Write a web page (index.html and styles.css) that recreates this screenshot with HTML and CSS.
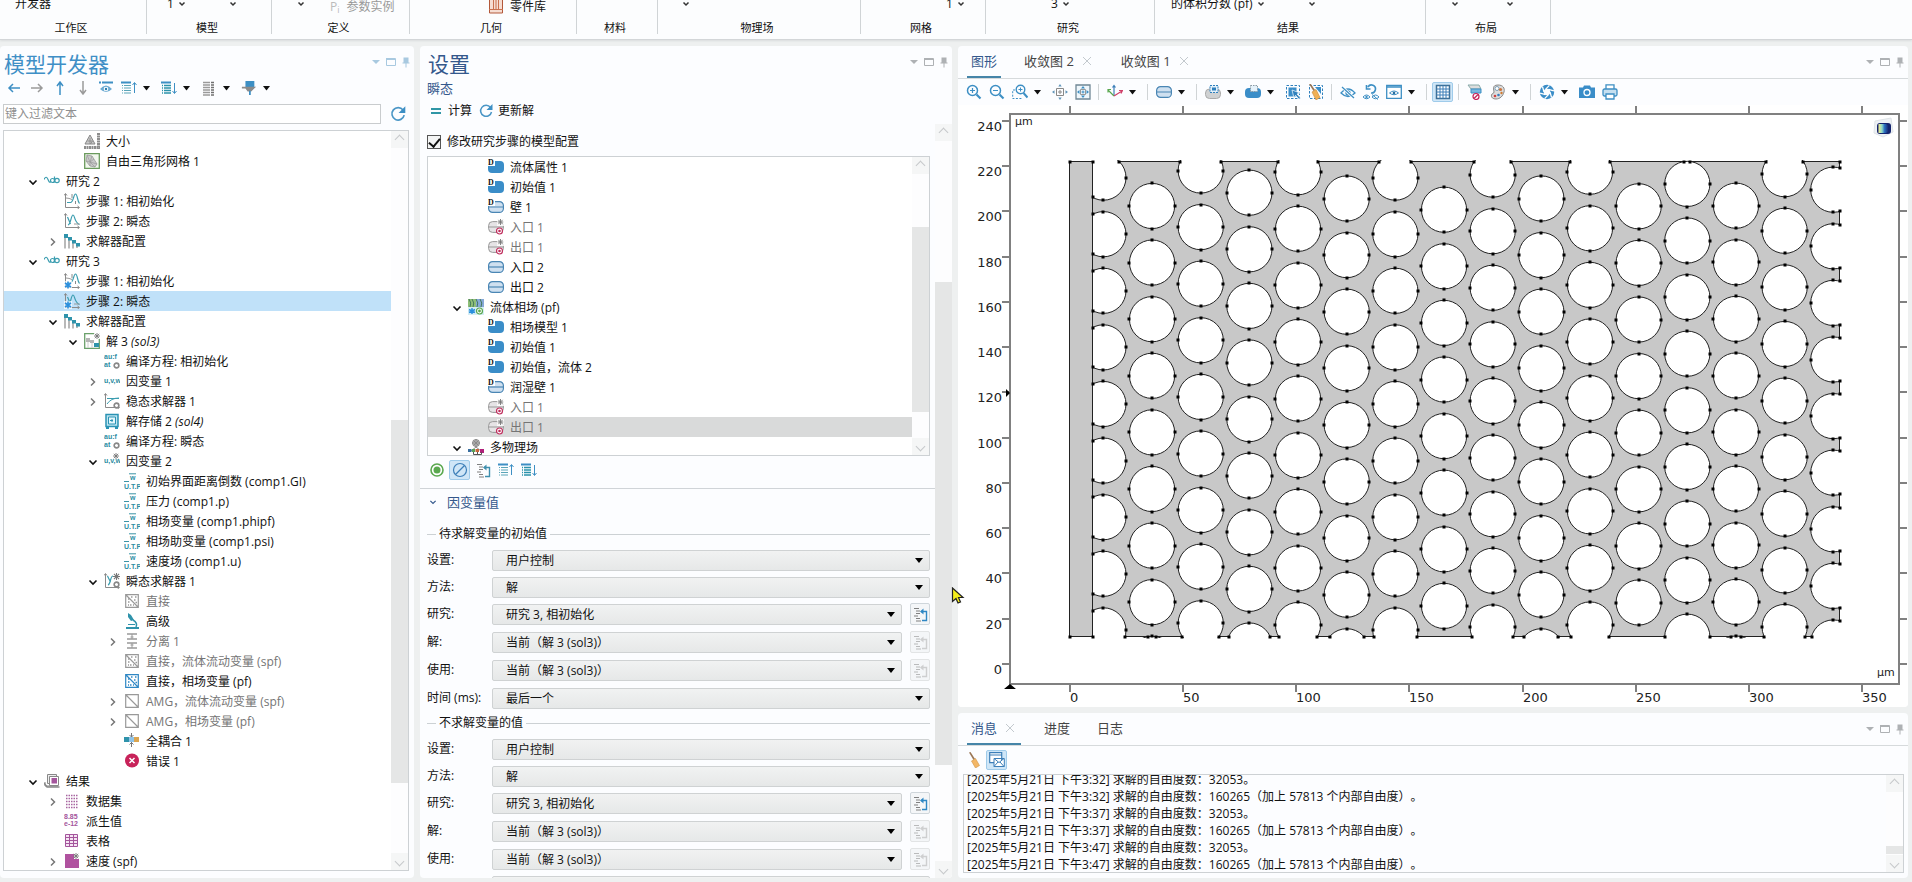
FILE: index.html
```html
<!DOCTYPE html>
<html lang="zh-CN">
<head>
<meta charset="utf-8">
<title>模型开发器</title>
<link rel="stylesheet" href="styles.css">
</head>
<body>
<svg class="defs" aria-hidden="true">
  <symbol id="chev-open" viewBox="0 0 16 16"><path d="M4.500 6.500 8 10l3.500-3.500" fill="none" stroke="currentColor" stroke-width="1.600"/></symbol>
  <symbol id="chev-shut" viewBox="0 0 16 16"><path d="M6 4.500 9.500 8 6 11.500" fill="none" stroke="#777" stroke-width="1.500"/></symbol>
  <symbol id="tri" viewBox="0 0 12 12"><path d="M3 4h7l-3.500 4.500z" fill="currentColor"/></symbol>
  <symbol id="mini" viewBox="0 0 8 8"><path d="M1.500 2.500 4 5l2.500-2.500" fill="none" stroke="#333" stroke-width="1.500"/></symbol>
  <symbol id="close" viewBox="0 0 10 10"><path d="m1 1 8 8M9 1 1 9" stroke="#c3c9ce" fill="none"/></symbol>
  <symbol id="w-down" viewBox="0 0 14 14"><path d="M3 5h8l-4 4z" fill="currentColor"/></symbol>
  <symbol id="w-max" viewBox="0 0 14 14"><path d="M2.500 3.500h9v7h-9zM2.500 3v1.500h9" fill="none" stroke="currentColor"/></symbol>
  <symbol id="w-pin" viewBox="0 0 14 14"><path d="M4.500 2.500h5v5h1v1h-3v4h-1v-4h-3v-1h1z" fill="currentColor"/></symbol>
  <symbol id="star" viewBox="0 0 6 6"><path d="M3 0v6M0 3h6M.8.8l4.400 4.400M5.200.8.8 5.200" stroke="currentColor" stroke-width=".9"/></symbol>
  <symbol id="gear" viewBox="0 0 6 6"><circle cx="3" cy="3" r="2" fill="#fff" stroke="#888" stroke-width="1.400"/></symbol>

  <symbol id="left" viewBox="0 0 16 16"><path d="M14 8H3M7 4 3 8l4 4" fill="none" stroke="#3d8fc4" stroke-width="1.500"/></symbol>
  <symbol id="right" viewBox="0 0 16 16"><path d="M2 8h11M9 4l4 4-4 4" fill="none" stroke="#9a9a9a" stroke-width="1.500"/></symbol>
  <symbol id="up" viewBox="0 0 16 16"><path d="M8 15V3M5 6l3-4 3 4" fill="none" stroke="#3d8fc4" stroke-width="1.500"/></symbol>
  <symbol id="down" viewBox="0 0 16 16"><path d="M8 1v12M5 10l3 4 3-4" fill="none" stroke="#9a9a9a" stroke-width="1.500"/></symbol>
  <symbol id="show" viewBox="0 0 16 16"><path d="M1 2.500h2M4 2.500h11" stroke="#3d8fc4" stroke-width="2"/><path d="M2 9q6-7 12 0-6 6-12 0z" fill="#6aaad2"/><circle cx="8" cy="9" r="2.300" fill="#fff"/><circle cx="8" cy="9" r="1.200" fill="#2b7db0"/></symbol>
  <symbol id="list-up" viewBox="0 0 16 16"><path d="M0 2.500h10" stroke="#3d8fc4" stroke-width="2"/><path d="M1 5.500h1M3 5.500h7M1 8h1M3 8h7M1 10.500h1M3 10.500h7M1 13h1M3 13h7" stroke="#5aa5b8"/><path d="M13.500 13V3M11.500 5l2-2.500 2 2.500" fill="none" stroke="#3d8fc4"/></symbol>
  <symbol id="list-down" viewBox="0 0 16 16"><path d="M0 2.500h10" stroke="#3d8fc4" stroke-width="2"/><path d="M1 5.500h1M3 5.500h7M1 8h1M3 8h7M1 10.500h1M3 10.500h7M1 13h1M3 13h7" stroke="#2b93ab" stroke-width="1.500"/><path d="M13.500 3v10M11.500 11l2 2.500 2-2.500" fill="none" stroke="#3d8fc4"/></symbol>
  <symbol id="list-col" viewBox="0 0 16 16"><path d="M2 2.500h7M2 5h7M2 7.500h7M2 10h7M2 12.500h7M2 15h7" stroke="#9a9a9a" stroke-width="1.500"/><path d="M10 2.500h3M10 5h3M10 7.500h3M10 10h3M10 12.500h3M10 15h3" stroke="#707070" stroke-width="1.700"/></symbol>
  <symbol id="funnel" viewBox="0 0 18 16"><path d="M5 0h10v7H5z" fill="#3d8fc4"/><path d="M1 6.500h16L11.500 12h-4L5 8.500H1z" fill="#8b8b8b"/><path d="M9 11h2v5H9z" fill="#3d8fc4"/></symbol>
  <symbol id="refresh" viewBox="0 0 16 16"><path d="M12.500 4.500A5.500 5.500 0 1 0 13.500 9" fill="none" stroke="#4a96c6" stroke-width="1.500"/><path d="M14.500 1v6h-6z" fill="#3d8fc4"/></symbol>
  <symbol id="equal" viewBox="0 0 16 16"><path d="M3 6h10M3 10h10" stroke="#2f96a6" stroke-width="2.200"/></symbol>

  <symbol id="size" viewBox="0 0 16 16"><path d="M6 2 11 11H1z" fill="#c9c9c9" stroke="#888"/><path d="M6 5v6M3.500 8h5l-2 3" fill="none" stroke="#888" stroke-width=".8"/><path d="M0 14.500h16M14.500 0v16" stroke="#8d8d8d" stroke-width="3" stroke-dasharray="2 .5"/></symbol>
  <symbol id="mesh" viewBox="0 0 16 16"><path d="M.7.7h14.600v14.600H.7z" fill="#f2f7ee" stroke="#6a9a5c" stroke-width="1.300"/><path d="m3 2 5 1 5 8-2 3-5-1-4-5z" fill="#c9c9c9" stroke="#999" stroke-width=".8"/><path d="m3 2 3 7 5 5M2 8l4 1 4-3M6 9l7 2M8 3 6 9v4" fill="none" stroke="#999" stroke-width=".7"/></symbol>
  <symbol id="study" viewBox="0 0 16 16"><path d="M0 6.500C1.500 3 3 4 4 6.500s1.500 3.500 3 2" fill="none" stroke="#3b9db0" stroke-width="1.200"/><circle cx="8.500" cy="7.500" r="2" fill="none" stroke="#3b9db0" stroke-width="1.200"/><path d="M10.500 3.500v6" stroke="#3b9db0" stroke-width="1.200"/><circle cx="13" cy="7.500" r="2.200" fill="none" stroke="#3b9db0" stroke-width="1.200"/></symbol>
  <symbol id="axes" viewBox="0 0 16 16"><path d="M1.500 1v13.500H15M0 2.500 1.500.5 3 2.500M13.500 13l2 1.500-2 1.500" fill="none" stroke="#8a8a8a"/></symbol>
  <symbol id="step1" viewBox="0 0 16 16"><use href="#axes"/><path d="M2 5q3 0 6 1.500" stroke="#999" fill="none"/><path d="M3 9.500h3.500c3 0 3-8.500 5-8.500s2 8 4 9.500" fill="none" stroke="#3b9db0" stroke-width="1.200"/><path d="M8 1v4M11.500 8v3" stroke="#8a8a8a"/></symbol>
  <symbol id="step2" viewBox="0 0 16 16"><use href="#axes"/><path d="m3.500 4 3 7M4 12C7 11 7 2 9 2s1 7 6.500 9.500" fill="none" stroke="#3b9db0" stroke-width="1.200"/><path d="M10 11h5.500" stroke="#999"/></symbol>
  <symbol id="snow" viewBox="0 0 16 16"><path d="M0 8h8v8H0z" fill="#fff" opacity=".7"/><path d="M4 8.500v7M1 10l6 4M7 10l-6 4" stroke="#2a8fdd" stroke-width="1.600"/></symbol>
  <symbol id="step1s" viewBox="0 0 16 16"><use href="#step1"/><use href="#snow"/></symbol>
  <symbol id="step2s" viewBox="0 0 16 16"><use href="#step2"/><use href="#snow"/></symbol>
  <symbol id="conf" viewBox="0 0 16 16"><path d="M1 4v11.500M5 6v9.500M9 9v6.500M13 11v4" stroke="#8a8a8a" stroke-width="1.200"/><path d="M0 1h4v4H0zM4 4h4v3.500H4zM8 7h4v3.500H8zM12 10h4v3.500h-4z" fill="#2f93ab"/></symbol>
  <symbol id="sol" viewBox="0 0 16 16"><path d="M.7.7h14.600v14.600H.7z" fill="#fff" stroke="#6aa06a" stroke-width="1.300"/><path d="M2 5h4v4H2zM6 7h4v3H6z" fill="#b5b5b5"/><path d="M4 9v6M8 10v5" stroke="#ccc"/><path d="M10 10h5v4h-5z" fill="#2f93ab"/><path d="M10 0h6v6h-6z" fill="#fff"/><use href="#star" x="10" y="0" width="6" height="6" color="#777"/></symbol>
  <symbol id="compile" viewBox="0 0 16 16"><g class="glyphs teal"><text x="0" y="6">au:f</text><text x="0" y="14">at</text></g><use href="#gear" x="9" y="9" width="7" height="7"/></symbol>
  <symbol id="uvw" viewBox="0 0 16 16"><text class="glyphs teal" x="0" y="10">u,v,w</text></symbol>
  <symbol id="uvws" viewBox="0 0 16 16"><use href="#uvw"/><use href="#star" x="9" y="0" width="6" height="6" color="#777"/></symbol>
  <symbol id="stat" viewBox="0 0 16 16"><use href="#axes"/><path d="M3 11q4-6 12-6M3 5.500h12" fill="none" stroke="#3b9db0"/><use href="#gear" x="9" y="9" width="7" height="7"/></symbol>
  <symbol id="tran" viewBox="0 0 16 16"><use href="#axes"/><path d="m3.500 3 3 6M4 12C7 11 6 3 9 3" fill="none" stroke="#3b9db0" stroke-width="1.200"/><use href="#star" x="9" y="0" width="7" height="7" color="#777"/><use href="#gear" x="9" y="8" width="7" height="7"/></symbol>
  <symbol id="store" viewBox="0 0 16 16"><path d="M2 1.500h12v12H2z" fill="#bfe6f2" stroke="#2a93b4" stroke-width="1.500"/><path d="M4.500 4h7v7h-7z" fill="#e4f6fb" stroke="#2a93b4"/><path d="M6 7.500h3M8 6v3" stroke="#2a93b4"/><path d="M2 15h3M11 15h3" stroke="#2a93b4" stroke-width="2"/></symbol>
  <symbol id="field" viewBox="0 0 16 16"><path d="M5 .8h7M0 8.500h5" stroke="#3b93a6"/><g class="glyphs teal"><text x="6" y="7">w</text><text x="0" y="15.500">U.T.P</text></g></symbol>
  <symbol id="direct" viewBox="0 0 16 16"><path d="M1.700 1.700h12.600v12.600H1.700zM2 2l12 12" fill="none" stroke="currentColor" stroke-width="1.200"/><path d="M4 6h1.500M4 9h1.500M6 12h1.500M7 4h1.500M11 4h1.500M10 7h1.500M11.500 9.500H13M4 12h1M9 12h1" stroke="currentColor" stroke-width="1.600"/></symbol>
  <symbol id="amg" viewBox="0 0 16 16"><path d="M1.700 1.700h12.600v12.600H1.700zM2 2l12 12" fill="none" stroke="currentColor" stroke-width="1.200"/></symbol>
  <symbol id="micro" viewBox="0 0 16 16"><path d="M4 0 7 2l3 5-3 1-3-4zM2 14h13v2H2zM4 11h7v1H4z" fill="#2f93ab"/><path d="M9 7q5 3 3 7" fill="none" stroke="#2f93ab" stroke-width="1.500"/></symbol>
  <symbol id="segr" viewBox="0 0 16 16"><path d="M3 1h10M3 6h10M3 10h10M3 15h10" stroke="#999" stroke-width="1.500"/><path d="M8 1v5M8 10v5M6.500 4h3M6.500 12h3" stroke="#999"/></symbol>
  <symbol id="couple" viewBox="0 0 16 16"><path d="M0 4h5v5H0z" fill="#2f93ab"/><path d="M5 4h5v5H5z" fill="#8fc3e8"/><path d="M10 4h5v5h-5z" fill="#dba550"/><path d="M7.500 0v4M5.500 2l2 2 2-2M7.500 9v5M5.500 11.500l2-2 2 2" fill="none" stroke="#777"/></symbol>
  <symbol id="error" viewBox="0 0 16 16"><circle cx="8" cy="7.500" r="7" fill="#c8235a"/><path d="m5.500 5 5 5M10.500 5l-5 5" stroke="#fff" stroke-width="1.500"/></symbol>
  <symbol id="result" viewBox="0 0 16 16"><path d="M1 9V13h13" fill="none" stroke="#888"/><path d="M3.500 1.500h9v9h-9z" fill="#eee" stroke="#888"/><path d="M5.500 3.500h9v9h-9z" fill="#fff" stroke="#888"/><path d="M7.500 5h5.500v5.500H7.500z" fill="#a4559c"/><path d="M0 10l3 4h12.500" fill="none" stroke="#888" stroke-width="1.500"/></symbol>
  <symbol id="dataset" viewBox="0 0 16 16"><path d="M2 2.500h12M2 5.500h12M2 8.500h12M2 11.500h12M2 14.500h12" stroke="#a765a0" stroke-width="1.300" stroke-dasharray="1.500 1"/></symbol>
  <symbol id="derived" viewBox="0 0 16 16"><g class="glyphs plum"><text x="0" y="6">8.85</text><text x="0" y="13">e-12</text></g></symbol>
  <symbol id="table" viewBox="0 0 16 16"><path d="M1.500 1.500h12v12h-12zM1.500 4.500h12M1.500 7.500h12M1.500 10.500h12M5.500 1.500v12M9.500 1.500v12" fill="#f5e4f3" stroke="#a4559c"/></symbol>
  <symbol id="surf" viewBox="0 0 16 16"><path d="M1 1h9v5h5v9H1z" fill="#b0529f"/><use href="#star" x="9" y="0" width="6" height="6" color="#777"/></symbol>

  <symbol id="dom" viewBox="0 0 16 16"><rect y="2" width="16" height="12" rx="4" fill="#3a8dc8"/><path d="M0 0h7v7H0z" fill="#fff"/><text class="dee" x="0" y="6">D</text></symbol>
  <symbol id="bnd" viewBox="0 0 16 16"><rect x=".6" y="2.600" width="14.800" height="10.800" rx="4" fill="#cfe0f0" stroke="#4a86b4" stroke-width="1.200"/><path d="M1 8h14" stroke="#4a86b4" stroke-width="1.200"/></symbol>
  <symbol id="bndd" viewBox="0 0 16 16"><use href="#bnd"/><path d="M0 0h7v7H0z" fill="#fff"/><text class="dee" x="0" y="6">D</text></symbol>
  <symbol id="off" viewBox="0 0 16 16"><rect x=".6" y="2.600" width="14.800" height="10.800" rx="4" fill="#e6e4e6" stroke="#999"/><path d="M1 8h14" stroke="#999"/><path d="M9 0h7v7H9z" fill="#fff" opacity=".8"/><use href="#star" x="9.500" y="0" width="6" height="6" color="#777"/><circle cx="11.500" cy="12" r="3" fill="#fff" stroke="#c0305f" stroke-width="1.200"/><circle cx="11.500" cy="12" r="1.300" fill="#c0305f"/></symbol>
  <symbol id="pf" viewBox="0 0 16 16"><path d="M0 0h8v8H0z" fill="#8fbf78"/><path d="M8 0h8v8H8z" fill="#86a9d8"/><path d="M1 0q3 4 1 8M4 0q3 4 1 8M8 0q3 4 1 8M12 0q3 4 1 8" fill="none" stroke="#46795c"/><path d="M0 8h16v8H0z" fill="#d5edf5"/><path d="M4 9v6M1 10.500l6 3M7 10.500l-6 3" stroke="#2a8fdd" stroke-width="1.400"/><circle cx="11.500" cy="12" r="3" fill="#fff" stroke="#5aa84f" stroke-width="1.200"/><circle cx="11.500" cy="12" r="1.400" fill="#5aa84f"/></symbol>
  <symbol id="multi" viewBox="0 0 16 16"><circle cx="8" cy="4" r="3.500" fill="#c4c4c4" stroke="#8a8a8a"/><path d="M8 0v8M4 4h8M8 8 3 12M8 8l5 4M5.500 1.500l5 5M10.500 1.500l-5 5" stroke="#8a8a8a"/><path d="M0 10h3.500v3H0z" fill="#3a6fa0"/><path d="M4 10h3v3H4z" fill="#58a455"/><path d="M7.500 10h3.500v3H7.500z" fill="#c8643c"/><path d="M12 10h4v4h-4z" fill="#b0207a"/><path d="M5.500 13v2.500h8V13M9.500 13v2.500" fill="none" stroke="#555"/></symbol>
  <symbol id="target" viewBox="0 0 16 16"><circle cx="8" cy="8" r="6" fill="#fff" stroke="#5aa84f" stroke-width="1.600"/><circle cx="8" cy="8" r="3.500" fill="#5aa84f"/></symbol>
  <symbol id="ban" viewBox="0 0 16 16"><circle cx="8" cy="8" r="6.500" fill="none" stroke="#3d7fb8" stroke-width="1.200"/><path d="m3.500 12.500 9-9" stroke="#3d7fb8" stroke-width="1.200"/></symbol>
  <symbol id="goto" viewBox="0 0 16 16"><path d="M2 2.500h5M4 5h4M4 7.500h4M2 10h4M4 12.500h4M4 15h5" stroke="#808080" stroke-width="1.200"/><path d="M10 14.500h4.500v-9H9" fill="none" stroke="currentColor" stroke-width="1.400"/><path d="M11.500 2.500v6l-3.500-3z" fill="currentColor"/></symbol>

  <symbol id="zin" viewBox="0 0 16 16"><circle cx="6.500" cy="6.500" r="5" fill="none" stroke="#3d8fc4" stroke-width="1.500"/><path d="M4 6.500h5M6.500 4v5" stroke="#3d8fc4" stroke-width="1.200"/><path d="m10.500 10.500 4 4" stroke="#3d8fc4" stroke-width="2.200"/></symbol>
  <symbol id="zout" viewBox="0 0 16 16"><circle cx="6.500" cy="6.500" r="5" fill="none" stroke="#3d8fc4" stroke-width="1.500"/><path d="M4 6.500h5" stroke="#3d8fc4" stroke-width="1.200"/><path d="m10.500 10.500 4 4" stroke="#3d8fc4" stroke-width="2.200"/></symbol>
  <symbol id="zbox" viewBox="0 0 16 16"><path d="M3 6H.7v8.500h9" fill="none" stroke="#3d8fc4" stroke-dasharray="2 1.500"/><circle cx="8.500" cy="5.500" r="4.300" fill="none" stroke="#3d8fc4" stroke-width="1.400"/><path d="M6.500 5.500h4M8.500 3.500v4" stroke="#3d8fc4"/><path d="m11.500 9 4 4.500" stroke="#3d8fc4" stroke-width="2"/></symbol>
  <symbol id="center" viewBox="0 0 16 16"><path d="M4.500 4.500h7v7h-7z" fill="none" stroke="#888"/><path d="M8 6v4M6 8h4" stroke="#888"/><path d="M8 0 6.300 2.500h3.400zM8 16l-1.700-2.500h3.400zM0 8l2.500-1.700v3.400zM16 8l-2.500-1.700v3.400z" fill="#5d93b8"/></symbol>
  <symbol id="fit" viewBox="0 0 16 16"><path d="M1 1h14v14H1z" fill="#eef6fb" stroke="#6f8795" stroke-width="1.300"/><path d="M5.500 5.500h5v5h-5z" fill="none" stroke="#999"/><path d="M8 2 6 4.500h4zM8 14l-2-2.500h4zM2 8l2.500-2v4zM14 8l-2.500-2v4z" fill="#3d8fc4"/><path d="M8 6.500v3M6.500 8h3" stroke="#3d8fc4"/></symbol>
  <symbol id="xyz" viewBox="0 0 16 16"><path d="M7 12V2M5.500 3.500 7 1.500l1.500 2" fill="none" stroke="#3d7fb8" stroke-width="1.200"/><path d="M7 12 1 6M1 8.500V5.500h3" fill="none" stroke="#5aa84f" stroke-width="1.200"/><path d="m7 12 8-5M12 6.500h3.500L14 9.500" fill="none" stroke="#d0406a" stroke-width="1.200"/></symbol>
  <symbol id="selobj" viewBox="0 0 16 16"><rect x=".5" y="5" width="15" height="9.500" rx="4" fill="#cfd1d2" stroke="#aaa"/><path d="M5 1.500h8v7H5z" fill="#e4f1fa" stroke="#2f80bd" stroke-dasharray="2 1"/><path d="M7 3.500h4v3H7z" fill="#2f80bd"/></symbol>
  <symbol id="seldom" viewBox="0 0 16 16"><rect x="0" y="4" width="16" height="10" rx="4" fill="#3a8dc8"/><path d="M5.500 1.500h7v6h-7z" fill="#e4f1fa" stroke="#8a9aa5" stroke-dasharray="1.500 1"/></symbol>
  <symbol id="selbox" viewBox="0 0 16 16"><path d="M1.500 1.500h13v13h-13z" fill="none" stroke="#2f80bd" stroke-dasharray="2.500 1.500"/><path d="M3.500 3.500h8v9h-8z" fill="#3a8dc8"/><path d="m7 6 8 3-3 1 3.500 4-1.500 1.300-3.500-4L9 14z" fill="#2f80bd" stroke="#fff" stroke-width=".7"/></symbol>
  <symbol id="broombox" viewBox="0 0 16 16"><path d="M1.500 1.500h13v13h-13z" fill="none" stroke="#2f80bd" stroke-dasharray="2.500 1.500"/><path d="M7 3h6v7z" fill="#3a8dc8"/><path d="m1 0 1.500-.5L7 6 5.500 7z" fill="#9a7655"/><path d="m4 8 4-2.500 4 8L8 16z" fill="#f0b055" stroke="#c88a3a" stroke-width=".6"/></symbol>
  <symbol id="hide" viewBox="0 0 16 16"><path d="M1 9q7-8 14 0-7 7-14 0z" fill="none" stroke="#3d8fc4" stroke-width="1.300"/><circle cx="8" cy="9" r="2" fill="none" stroke="#3d8fc4" stroke-width="1.300"/><path d="m2 3 12 11" stroke="#fff" stroke-width="3"/><path d="m2 3 12 11" stroke="#3d8fc4" stroke-width="1.300"/></symbol>
  <symbol id="unhide" viewBox="0 0 16 16"><path d="M5 3a4 4 0 1 1 3 6M3.500 1v4h4" fill="none" stroke="#3d8fc4" stroke-width="1.600"/><path d="M0 13q3.500-4 7 0-3.500 3.500-7 0zM9 13q3.500-4 7 0-3.500 3.500-7 0zM9 10.500l6 5" fill="none" stroke="#3d8fc4"/><circle cx="3.500" cy="13" r="1.200" fill="#3d8fc4"/></symbol>
  <symbol id="winview" viewBox="0 0 16 16"><path d="M.7 1.500h14.600v12.800H.7z" fill="#fff" stroke="#3d8fc4" stroke-width="1.300"/><path d="M1 3h14" stroke="#3d8fc4" stroke-width="1.500"/><path d="M3.500 9Q8 5 12.500 9 8 12.500 3.500 9z" fill="none" stroke="#3d8fc4"/><circle cx="8" cy="9" r="1.300" fill="#2a6f9f"/></symbol>
  <symbol id="grid" viewBox="0 0 16 16"><path d="M1.500 1.500h13v13h-13z" fill="#fff" stroke="#3d6f96" stroke-width="1.500"/><path d="M1.500 5h13M1.500 8h13M1.500 11h13M5 1.500v13M8 1.500v13M11 1.500v13" stroke="#3d7fb8"/></symbol>
  <symbol id="clip" viewBox="0 0 16 16"><path d="m1 1 3 4h10l-2-4z" fill="#ddd" stroke="#8aa"/><path d="M4 5h10v4H4z" fill="#7ab8e0" stroke="#3d8fc4"/><circle cx="9" cy="12.500" r="3" fill="#fff" stroke="#c8235a" stroke-width="1.200"/><path d="m7 14.500 4-4" stroke="#c8235a" stroke-width="1.200"/></symbol>
  <symbol id="palette" viewBox="0 0 16 16"><path d="M8 1c5 0 7 3 6 7s-4 7-8 7c-3 0-5-1.500-4.500-4 .3-2 2.500-1 2.500-3S1.500 1 8 1z" fill="#dcdcdc" stroke="#888"/><circle cx="7" cy="4.500" r="2" fill="#fff" stroke="#7d9fb8"/><circle cx="10.500" cy="5.500" r="1.600" fill="#c9743f"/><circle cx="5" cy="12" r="1.300" fill="#d04040"/><circle cx="8.500" cy="11" r="1.300" fill="#3a7fc0"/><circle cx="11.500" cy="9" r="1.200" fill="#d07a30"/></symbol>
  <symbol id="shutter" viewBox="0 0 16 16"><circle cx="8" cy="8" r="5.200" fill="none" stroke="#3a8dc8" stroke-width="4"/><path d="m11 8 1.500 5.400M9.500 10.600l-3.900 4M6.500 10.600 1.100 9.200M5 8 3.500 2.600M6.500 5.400l3.900-4M9.500 5.400l5.400 1.400" stroke="#fff" stroke-width="1.300"/></symbol>
  <symbol id="camera" viewBox="0 0 16 16"><path d="M0 3.500h4l1-2h6l1 2h4v10.500H0z" fill="#3a8dc8"/><circle cx="8" cy="8.500" r="3" fill="none" stroke="#fff" stroke-width="1.300"/></symbol>
  <symbol id="printer" viewBox="0 0 16 16"><path d="M4 5V.8h8V5" fill="#fff" stroke="#3d8fc4" stroke-width="1.300"/><rect x="1" y="5" width="14" height="7" rx="1.500" fill="#c5dff0" stroke="#3d8fc4" stroke-width="1.300"/><path d="M4 10h8v5H4z" fill="#fff" stroke="#3d8fc4" stroke-width="1.300"/></symbol>
  <symbol id="broom" viewBox="0 0 16 16"><path d="m3 .5 1.500-.5L9 7 7.500 8z" fill="#9a7655"/><path d="m5.500 9 4-2.500 4 7L9.500 16z" fill="#f3b766" stroke="#cf9347" stroke-width=".6"/></symbol>
  <symbol id="mail" viewBox="0 0 16 16"><path d="M.7.700h12v10H.7zM1 3h12" fill="#fff" stroke="#3d7fb8" stroke-width="1.200"/><path d="M5 6.500h10.300v8H5zM5 6.500l5 4 5-4M5 14.500l4-4.500M15 14.500 11 10" fill="#fff" stroke="#3d7fb8"/></symbol>
</svg>

<header class="ribbon">
  <section class="group g-work"><div class="cmds"><span class="tail">开发器</span></div><h2>工作区</h2></section>
  <section class="group g-model"><div class="cmds"><span class="tail">1<svg class="mini"><use href="#mini"/></svg></span><svg class="mini"><use href="#mini"/></svg></div><h2>模型</h2></section>
  <section class="group g-def"><div class="cmds"><svg class="mini"><use href="#mini"/></svg><button class="cmd muted" disabled><i class="pi">P<sub>i</sub></i>参数实例</button></div><h2>定义</h2></section>
  <section class="group g-geom"><div class="cmds"><button class="cmd"><svg width="14" height="14" viewBox="0 0 14 14"><path d="M.5-4v17h13V-4" fill="#f6ddd2" stroke="#b3583a"/><path d="M4.500 0v9M7 0v9M9.500 0v9M0 9.500h14" stroke="#c9714f" fill="none"/></svg>零件库</button></div><h2>几何</h2></section>
  <section class="group g-mat"><div class="cmds"></div><h2>材料</h2></section>
  <section class="group g-phys"><div class="cmds"><svg class="mini"><use href="#mini"/></svg></div><h2>物理场</h2></section>
  <section class="group g-mesh"><div class="cmds"><span class="tail">1<svg class="mini"><use href="#mini"/></svg></span></div><h2>网格</h2></section>
  <section class="group g-study"><div class="cmds"><span class="tail">3<svg class="mini"><use href="#mini"/></svg></span></div><h2>研究</h2></section>
  <section class="group g-res"><div class="cmds"><span class="tail">的体积分数 (pf)<svg class="mini"><use href="#mini"/></svg></span><svg class="mini"><use href="#mini"/></svg></div><h2>结果</h2></section>
  <section class="group g-lay"><div class="cmds"><svg class="mini"><use href="#mini"/></svg><svg class="mini"><use href="#mini"/></svg></div><h2>布局</h2></section>
</header>

<main class="desk">
  <section class="panel builder">
    <div class="title-row"><h1>模型开发器</h1>
      <div class="win pale"><button aria-label="菜单"><svg><use href="#w-down"/></svg></button><button aria-label="最大化"><svg><use href="#w-max"/></svg></button><button aria-label="固定"><svg><use href="#w-pin"/></svg></button></div></div>
    <div class="toolbar" role="toolbar">
      <button aria-label="后退"><svg><use href="#left"/></svg></button><button aria-label="前进"><svg><use href="#right"/></svg></button><button aria-label="上移"><svg><use href="#up"/></svg></button><button aria-label="下移"><svg><use href="#down"/></svg></button><button aria-label="显示"><svg><use href="#show"/></svg></button><button aria-label="折叠"><svg><use href="#list-up"/></svg></button><button class="drop" aria-label="折叠选项"><svg><use href="#tri"/></svg></button><button aria-label="展开"><svg><use href="#list-down"/></svg></button><button class="drop" aria-label="展开选项"><svg><use href="#tri"/></svg></button><button aria-label="列"><svg><use href="#list-col"/></svg></button><button class="drop" aria-label="列选项"><svg><use href="#tri"/></svg></button><button aria-label="筛选"><svg><use href="#funnel"/></svg></button><button class="drop" aria-label="筛选选项"><svg><use href="#tri"/></svg></button>
    </div>
    <div class="filter"><input type="text" placeholder="键入过滤文本" aria-label="过滤"><button aria-label="刷新"><svg><use href="#refresh"/></svg></button></div>
    <div class="box">
      <ul class="tree" role="tree">
        <li class="l3"><i></i><svg><use href="#size"/></svg>大小</li>
        <li class="l3"><i></i><svg><use href="#mesh"/></svg>自由三角形网格 1</li>
        <li class="l1"><svg><use href="#chev-open"/></svg><svg><use href="#study"/></svg>研究 2</li>
        <li class="l2"><i></i><svg><use href="#step1"/></svg>步骤 1: 相初始化</li>
        <li class="l2"><i></i><svg><use href="#step2"/></svg>步骤 2: 瞬态</li>
        <li class="l2"><svg><use href="#chev-shut"/></svg><svg><use href="#conf"/></svg>求解器配置</li>
        <li class="l1"><svg><use href="#chev-open"/></svg><svg><use href="#study"/></svg>研究 3</li>
        <li class="l2"><i></i><svg><use href="#step1s"/></svg>步骤 1: 相初始化</li>
        <li class="l2 picked"><i></i><svg><use href="#step2s"/></svg>步骤 2: 瞬态</li>
        <li class="l2"><svg><use href="#chev-open"/></svg><svg><use href="#conf"/></svg>求解器配置</li>
        <li class="l3"><svg><use href="#chev-open"/></svg><svg><use href="#sol"/></svg>解 3 <em>(sol3)</em></li>
        <li class="l4"><i></i><svg><use href="#compile"/></svg>编译方程: 相初始化</li>
        <li class="l4"><svg><use href="#chev-shut"/></svg><svg><use href="#uvw"/></svg>因变量 1</li>
        <li class="l4"><svg><use href="#chev-shut"/></svg><svg><use href="#stat"/></svg>稳态求解器 1</li>
        <li class="l4"><i></i><svg><use href="#store"/></svg>解存储 2 <em>(sol4)</em></li>
        <li class="l4"><i></i><svg><use href="#compile"/></svg>编译方程: 瞬态</li>
        <li class="l4"><svg><use href="#chev-open"/></svg><svg><use href="#uvws"/></svg>因变量 2</li>
        <li class="l5"><i></i><svg><use href="#field"/></svg>初始界面距离倒数 (comp1.GI)</li>
        <li class="l5"><i></i><svg><use href="#field"/></svg>压力 (comp1.p)</li>
        <li class="l5"><i></i><svg><use href="#field"/></svg>相场变量 (comp1.phipf)</li>
        <li class="l5"><i></i><svg><use href="#field"/></svg>相场助变量 (comp1.psi)</li>
        <li class="l5"><i></i><svg><use href="#field"/></svg>速度场 (comp1.u)</li>
        <li class="l4"><svg><use href="#chev-open"/></svg><svg><use href="#tran"/></svg>瞬态求解器 1</li>
        <li class="l5 dim"><i></i><svg><use href="#direct"/></svg>直接</li>
        <li class="l5"><i></i><svg><use href="#micro"/></svg>高级</li>
        <li class="l5 dim"><svg><use href="#chev-shut"/></svg><svg><use href="#segr"/></svg>分离 1</li>
        <li class="l5 dim"><i></i><svg><use href="#direct"/></svg>直接，流体流动变量 (spf)</li>
        <li class="l5"><i></i><svg class="blue"><use href="#direct"/></svg>直接，相场变量 (pf)</li>
        <li class="l5 dim"><svg><use href="#chev-shut"/></svg><svg><use href="#amg"/></svg>AMG，流体流动变量 (spf)</li>
        <li class="l5 dim"><svg><use href="#chev-shut"/></svg><svg><use href="#amg"/></svg>AMG，相场变量 (pf)</li>
        <li class="l5"><i></i><svg><use href="#couple"/></svg>全耦合 1</li>
        <li class="l5"><i></i><svg><use href="#error"/></svg>错误 1</li>
        <li class="l1"><svg><use href="#chev-open"/></svg><svg><use href="#result"/></svg>结果</li>
        <li class="l2"><svg><use href="#chev-shut"/></svg><svg><use href="#dataset"/></svg>数据集</li>
        <li class="l2"><i></i><svg><use href="#derived"/></svg>派生值</li>
        <li class="l2"><i></i><svg><use href="#table"/></svg>表格</li>
        <li class="l2"><svg><use href="#chev-shut"/></svg><svg><use href="#surf"/></svg>速度 (spf)</li>
      </ul>
      <div class="scroll s-tree"><button aria-label="向上"></button><div class="track"><b></b></div><button class="dn" aria-label="向下"></button></div>
    </div>
  </section>

  <section class="panel settings">
    <div class="title-row"><h1>设置</h1>
      <div class="win"><button aria-label="菜单"><svg><use href="#w-down"/></svg></button><button aria-label="最大化"><svg><use href="#w-max"/></svg></button><button aria-label="固定"><svg><use href="#w-pin"/></svg></button></div></div>
    <p class="sub">瞬态</p>
    <div class="actions"><button><svg><use href="#equal"/></svg>计算</button><button><svg><use href="#refresh"/></svg>更新解</button></div>
    <div class="body">
      <div class="form">
        <div class="pad">
          <label class="check"><input type="checkbox" checked>修改研究步骤的模型配置</label>
          <div class="box short">
            <ul class="tree" role="tree">
              <li class="l2"><i></i><svg><use href="#dom"/></svg>流体属性 1</li>
              <li class="l2"><i></i><svg><use href="#dom"/></svg>初始值 1</li>
              <li class="l2"><i></i><svg><use href="#bndd"/></svg>壁 1</li>
              <li class="l2 dim"><i></i><svg><use href="#off"/></svg>入口 1</li>
              <li class="l2 dim"><i></i><svg><use href="#off"/></svg>出口 1</li>
              <li class="l2"><i></i><svg><use href="#bnd"/></svg>入口 2</li>
              <li class="l2"><i></i><svg><use href="#bnd"/></svg>出口 2</li>
              <li class="l1"><svg><use href="#chev-open"/></svg><svg><use href="#pf"/></svg>流体相场 (pf)</li>
              <li class="l2"><i></i><svg><use href="#dom"/></svg>相场模型 1</li>
              <li class="l2"><i></i><svg><use href="#dom"/></svg>初始值 1</li>
              <li class="l2"><i></i><svg><use href="#dom"/></svg>初始值，流体 2</li>
              <li class="l2"><i></i><svg><use href="#bndd"/></svg>润湿壁 1</li>
              <li class="l2 dim"><i></i><svg><use href="#off"/></svg>入口 1</li>
              <li class="l2 dim greyed"><i></i><svg><use href="#off"/></svg>出口 1</li>
              <li class="l1"><svg><use href="#chev-open"/></svg><svg><use href="#multi"/></svg>多物理场</li>
            </ul>
            <div class="scroll s-phys"><button aria-label="向上"></button><div class="track"><b></b></div><button class="dn" aria-label="向下"></button></div>
          </div>
          <div class="toolbar under" role="toolbar"><button aria-label="启用"><svg><use href="#target"/></svg></button><button class="on" aria-label="禁用"><svg><use href="#ban"/></svg></button><button class="slate" aria-label="转到"><svg><use href="#goto"/></svg></button><button aria-label="折叠"><svg><use href="#list-up"/></svg></button><button aria-label="展开"><svg><use href="#list-down"/></svg></button></div>
        </div>
        <div class="pad section">
          <h2><svg><use href="#chev-open"/></svg>因变量值</h2>
          <fieldset>
            <legend>待求解变量的初始值</legend>
            <div class="row"><label for="a1">设置:</label><div class="pick"><select id="a1"><option>用户控制</option></select></div></div>
            <div class="row"><label for="a2">方法:</label><div class="pick"><select id="a2"><option>解</option></select></div></div>
            <div class="row go"><label for="a3">研究:</label><div class="pick"><select id="a3"><option>研究 3, 相初始化</option></select></div><button aria-label="转到源"><svg><use href="#goto"/></svg></button></div>
            <div class="row go"><label for="a4">解:</label><div class="pick"><select id="a4"><option>当前（解 3 (sol3)）</option></select></div><button disabled aria-label="转到源"><svg><use href="#goto"/></svg></button></div>
            <div class="row go"><label for="a5">使用:</label><div class="pick"><select id="a5"><option>当前（解 3 (sol3)）</option></select></div><button disabled aria-label="转到源"><svg><use href="#goto"/></svg></button></div>
            <div class="row"><label for="a6">时间 (ms):</label><div class="pick"><select id="a6"><option>最后一个</option></select></div></div>
          </fieldset>
          <fieldset>
            <legend>不求解变量的值</legend>
            <div class="row"><label for="b1">设置:</label><div class="pick"><select id="b1"><option>用户控制</option></select></div></div>
            <div class="row"><label for="b2">方法:</label><div class="pick"><select id="b2"><option>解</option></select></div></div>
            <div class="row go"><label for="b3">研究:</label><div class="pick"><select id="b3"><option>研究 3, 相初始化</option></select></div><button aria-label="转到源"><svg><use href="#goto"/></svg></button></div>
            <div class="row go"><label for="b4">解:</label><div class="pick"><select id="b4"><option>当前（解 3 (sol3)）</option></select></div><button disabled aria-label="转到源"><svg><use href="#goto"/></svg></button></div>
            <div class="row go"><label for="b5">使用:</label><div class="pick"><select id="b5"><option>当前（解 3 (sol3)）</option></select></div><button disabled aria-label="转到源"><svg><use href="#goto"/></svg></button></div>
            <div class="row"><span></span><div class="pick"><select aria-label="时间"></select></div></div>
          </fieldset>
        </div>
      </div>
      <div class="scroll s-form"><button aria-label="向上"></button><div class="track"><b></b></div><button class="dn" aria-label="向下"></button></div>
    </div>
  </section>

  <div class="side">
    <section class="panel graphics">
      <div class="tabs" role="tablist"><button role="tab" class="now">图形</button><button role="tab">收敛图 2<svg><use href="#close"/></svg></button><button role="tab">收敛图 1<svg><use href="#close"/></svg></button>
        <div class="win"><button aria-label="菜单"><svg><use href="#w-down"/></svg></button><button aria-label="最大化"><svg><use href="#w-max"/></svg></button><button aria-label="固定"><svg><use href="#w-pin"/></svg></button></div></div>
      <div class="toolbar view" role="toolbar">
        <button aria-label="放大"><svg><use href="#zin"/></svg></button><button aria-label="缩小"><svg><use href="#zout"/></svg></button><button aria-label="框选缩放"><svg><use href="#zbox"/></svg></button><button class="drop" aria-label="缩放选项"><svg><use href="#tri"/></svg></button><button aria-label="居中"><svg><use href="#center"/></svg></button><button aria-label="缩放到范围"><svg><use href="#fit"/></svg></button><hr>
        <button aria-label="视图方向"><svg><use href="#xyz"/></svg></button><button class="drop" aria-label="方向选项"><svg><use href="#tri"/></svg></button><hr>
        <button aria-label="边界"><svg><use href="#bnd"/></svg></button><button class="drop" aria-label="边界选项"><svg><use href="#tri"/></svg></button><hr>
        <button aria-label="选择对象"><svg><use href="#selobj"/></svg></button><button class="drop" aria-label="对象选项"><svg><use href="#tri"/></svg></button><button aria-label="选择域"><svg><use href="#seldom"/></svg></button><button class="drop" aria-label="域选项"><svg><use href="#tri"/></svg></button><button aria-label="选择框"><svg><use href="#selbox"/></svg></button><button aria-label="取消选择"><svg><use href="#broombox"/></svg></button><hr>
        <button aria-label="隐藏"><svg><use href="#hide"/></svg></button><button aria-label="重置隐藏"><svg><use href="#unhide"/></svg></button><button aria-label="查看"><svg><use href="#winview"/></svg></button><button class="drop" aria-label="查看选项"><svg><use href="#tri"/></svg></button><hr>
        <button class="on" aria-label="网格"><svg><use href="#grid"/></svg></button><hr>
        <button aria-label="裁剪"><svg><use href="#clip"/></svg></button><button aria-label="颜色"><svg><use href="#palette"/></svg></button><button class="drop" aria-label="颜色选项"><svg><use href="#tri"/></svg></button><hr>
        <button aria-label="环境"><svg><use href="#shutter"/></svg></button><button class="drop" aria-label="环境选项"><svg><use href="#tri"/></svg></button><button aria-label="快照"><svg><use href="#camera"/></svg></button><button aria-label="打印"><svg><use href="#printer"/></svg></button>
      </div>
      <svg class="plot" viewBox="958 105 950 602" role="img" aria-label="几何图形">
        <defs>
          <clipPath id="area"><path d="M1092 160h748.500v478H1092z"/></clipPath>
          <linearGradient id="jet"><stop offset="0" stop-color="#f5f08a"/><stop offset=".35" stop-color="#8ed6c8"/><stop offset=".6" stop-color="#2b6fc0"/><stop offset="1" stop-color="#14246e"/></linearGradient>
        </defs>
        <path class="frame" d="M1010 114h889v570h-889z"/>
        <g id="ticks"></g>
        <path d="m1010 684 6 5h-12zM1010 393l-4-4v8z"/>
        <text class="unit" x="1015" y="125">µm</text><text class="unit" x="1877" y="676">µm</text>
        <g transform="translate(1873 118)"><path d="m2 3 16-3 2 14-10 5-9-4z" fill="#eef1f4" stroke="#dfe4e8"/><rect x="4" y="5" width="14" height="11" rx="3" fill="#14246e"/><path d="M5.500 6h7q3 0 3 4.500t-3 4.500h-7z" fill="url(#jet)"/></g>
        <path class="solid" d="M1069.500 161.500h770v475h-770z"/>
        <g id="pores" clip-path="url(#area)"></g>
        <path class="edge" d="M1092.500 161.500v475"/>
        <path id="points" d=""/>
      </svg>
    </section>

    <section class="panel messages">
      <div class="tabs" role="tablist"><button role="tab" class="now">消息<svg><use href="#close"/></svg></button><button role="tab">进度</button><button role="tab">日志</button>
        <div class="win"><button aria-label="菜单"><svg><use href="#w-down"/></svg></button><button aria-label="最大化"><svg><use href="#w-max"/></svg></button><button aria-label="固定"><svg><use href="#w-pin"/></svg></button></div></div>
      <div class="toolbar view" role="toolbar"><button aria-label="清除"><svg><use href="#broom"/></svg></button><button class="on" aria-label="自动显示"><svg><use href="#mail"/></svg></button></div>
      <div class="box log">
        <div class="lines">
          <p>[2025年5月21日 下午3:32] 求解的自由度数：32053。</p>
          <p>[2025年5月21日 下午3:32] 求解的自由度数：160265（加上 57813 个内部自由度）。</p>
          <p>[2025年5月21日 下午3:37] 求解的自由度数：32053。</p>
          <p>[2025年5月21日 下午3:37] 求解的自由度数：160265（加上 57813 个内部自由度）。</p>
          <p>[2025年5月21日 下午3:47] 求解的自由度数：32053。</p>
          <p>[2025年5月21日 下午3:47] 求解的自由度数：160265（加上 57813 个内部自由度）。</p>
        </div>
        <div class="scroll s-log"><button aria-label="向上"></button><div class="track"><b></b></div><button class="dn" aria-label="向下"></button></div>
      </div>
    </section>
  </div>
</main>
<svg class="cursor" viewBox="0 0 14 18" aria-hidden="true"><path d="M1.500 1v13.500l3.500-3 2 4.500 2.500-1-2-4.500h4.500z" fill="#f4ee1c" stroke="#222" stroke-width="1.200"/></svg>
<script src="plot.js"></script>
</body>
</html>
```
FILE: styles.css
```css
* { box-sizing: border-box; margin: 0; padding: 0; }

body {
  height: 100vh;
  display: flex;
  flex-direction: column;
  gap: 6px;
  overflow: hidden;
  background: #eef0f0;
  color: #111;
  font: 12px/20px "Open Sans", "Noto Sans CJK SC", sans-serif;
  text-spacing-trim: space-all;
}

button, input, select { font: inherit; color: inherit; }
button { border: 0; background: none; }
ul { list-style: none; }
svg { flex: none; }
.defs { display: none; }

.glyphs { font: bold 7px/1 "Liberation Sans", sans-serif; }
.teal { fill: #2b8da3; }
.plum { fill: #a4559c; }
.dee { font: bold 8px/1 "Liberation Serif", serif; fill: #111; }

/* ribbon */
.ribbon {
  display: flex;
  flex: none;
  height: 40px;
  background: #fcfdfe;
  border-bottom: 1px solid #d3d6d8;
  box-shadow: 0 1px 2px #d9dcdd;
}
.group {
  display: flex;
  flex-direction: column;
  height: 34px;
  border-right: 1px solid #d0d4d6;
}
.group h2 { font-size: 11px; font-weight: 400; line-height: 16px; text-align: center; padding-right: 4px; }
.cmds { display: flex; flex: none; align-items: flex-start; height: 20px; }
.tail { display: flex; gap: 4px; line-height: 8px; white-space: nowrap; }
.mini { width: 8px; height: 8px; }
.cmd { display: flex; align-items: flex-start; gap: 7px; height: 14px; line-height: 14px; }
.muted { color: #999; }
.pi { font-style: normal; color: #bbb; }
.pi sub { font-size: 9px; vertical-align: -2px; }
.g-work { width: 147px; }
.g-work .cmds { padding-left: 15px; }
.g-model { width: 125px; }
.g-model .cmds { padding-left: 20px; gap: 43px; }
.g-def { width: 138px; }
.g-def .cmds { padding-left: 25px; gap: 25px; }
.g-geom { width: 167px; }
.g-geom .cmds { padding-left: 79px; }
.g-mat { width: 81px; }
.g-phys { width: 203px; }
.g-phys .cmds { padding-left: 24px; }
.g-mesh { width: 125px; }
.g-mesh .cmds { padding-left: 85px; }
.g-study { width: 169px; }
.g-study .cmds { padding-left: 65px; }
.g-res { width: 271px; }
.g-res .cmds { padding-left: 16px; gap: 43px; }
.g-lay { width: 125px; }
.g-lay .cmds { padding-left: 25px; gap: 47px; }

/* panels */
.desk {
  flex: 1;
  min-height: 0;
  display: grid;
  grid-template-columns: 414fr 532fr 950fr;
  gap: 6px;
  padding: 0 4px 4px 0;
}
.panel {
  min-width: 0;
  min-height: 0;
  display: flex;
  flex-direction: column;
  background: #fcfdff;
  border-radius: 4px;
  overflow: hidden;
}
.title-row { display: flex; justify-content: space-between; height: 31px; }
.title-row h1 { font-size: 21px; font-weight: 400; line-height: 36px; padding-left: 4px; color: #3f8fc6; }
.settings h1 { padding-left: 8px; color: #34588c; }
.win { display: flex; gap: 1px; margin-left: auto; padding: 9px 1px 0 0; color: #aeb1b4; }
.win button, .win svg { display: block; width: 14px; height: 14px; }
.win.pale { color: #a8c9e0; }

.toolbar { display: flex; flex: none; align-items: center; height: 22px; padding-left: 2px; }
.toolbar button { display: flex; align-items: center; justify-content: center; width: 23px; height: 22px; }
.toolbar svg { width: 16px; height: 16px; }
.toolbar .drop { width: 12px; margin-right: 5px; }
.toolbar .drop svg { width: 12px; height: 12px; }
.toolbar .on { width: 21px; height: 20px; margin: 0 1px; background: #cfe6f7; border: 1px solid #9fcbea; border-radius: 2px; }
.toolbar hr { width: 1px; height: 16px; margin: 0 4px; border: 0; background: #d0d4d6; }
.slate { color: #3f8fae; }

.filter { display: flex; align-items: center; gap: 8px; height: 20px; margin: 5px 7px 6px 3px; }
.filter input { flex: 1; height: 20px; min-width: 0; padding: 0 1px; border: 1px solid #c9ccce; background: #fff; }
.filter ::placeholder { color: #8f8f8f; }
.filter button, .filter svg { display: block; width: 18px; height: 18px; }

.box { display: flex; min-height: 0; background: #fff; border: 1px solid #cdd1d4; overflow: hidden; }
.builder .box { flex: 1; margin: 0 5px 7px 3px; }
.short { height: 300px; }
.tree { flex: 1; min-width: 0; }
.tree li { display: flex; align-items: center; height: 20px; padding-top: 2px; white-space: pre; }
.tree li > :first-child { width: 16px; height: 16px; margin-right: 3px; flex: none; }
.tree li > :nth-child(2) { width: 16px; height: 16px; margin-right: 6px; margin-bottom: 2px; }
.l1 { padding-left: 21px; }
.l2 { padding-left: 41px; }
.l3 { padding-left: 61px; }
.l4 { padding-left: 81px; }
.l5 { padding-left: 101px; }
.picked { background: #c0e1f9; }
.greyed { background: #d9dada; }
.dim { color: #757575; }
.dim svg { color: #999; }
.blue { color: #2f87c4; }

/* scrollbars */
.scroll { flex: none; display: flex; flex-direction: column; width: 17px; background: #fdfdfe; }
.scroll button { height: 17px; display: grid; place-items: center; background: #f5f6f6; }
.scroll button::before { content: ""; width: 6px; height: 6px; border: solid #c6c9cb; border-width: 1px 0 0 1px; transform: rotate(45deg); }
.scroll .dn::before { transform: rotate(225deg); }
.track { flex: 1; display: grid; }
.track b { grid-row: 2; background: #e5e6e6; }
.s-tree .track { grid-template-rows: 272fr 363fr 70fr; }
.s-phys .track { grid-template-rows: 53fr 185fr 26fr; }
.s-form .track { grid-template-rows: 141fr 483fr 96fr; }
.s-log .track { grid-template-rows: 55fr 8fr 1fr; }

/* settings */
.sub { padding-left: 7px; font-size: 13px; line-height: 22px; color: #34588c; }
.actions { display: flex; height: 25px; padding: 2px 0 0 8px; gap: 6px; }
.actions button { display: flex; align-items: center; gap: 4px; height: 20px; }
.actions svg { width: 16px; height: 16px; }
.body { flex: 1; min-height: 0; display: flex; }
.form { flex: 1; min-width: 0; overflow: hidden; }
.pad { padding: 0 5px 0 7px; }
.check { display: flex; align-items: center; gap: 6px; height: 32px; padding-top: 4px; }
.check input { appearance: none; display: grid; place-items: center; width: 14px; height: 14px; background: #f3f4f4; border: 1px solid #555; }
.check input:checked::after { content: ""; width: 5px; height: 9px; margin-bottom: 2px; border: solid #111; border-width: 0 2px 2px 0; transform: rotate(40deg); }
.under { height: 32px; padding-bottom: 4px; margin-left: -2px; }
.pad > .under { padding-left: 0; }
.section { border-top: 1px solid #d0d4d8; }
.section h2 { display: flex; align-items: center; gap: 8px; height: 26px; font-size: 13px; font-weight: 400; color: #34588c; }
.section h2 svg { width: 12px; height: 12px; }
fieldset { border: 0; display: flex; flex-direction: column; gap: 6px; }
.section h2 + fieldset { margin-top: 10px; }
fieldset + fieldset { margin-top: 6px; }
legend { display: flex; align-items: center; gap: 3px; width: 100%; height: 18px; margin-bottom: 6px; }
legend::before, legend::after { content: ""; width: 9px; height: 1px; background: #ccd1d4; }
legend::after { flex: 1; }
.row { display: grid; grid-template-columns: 57px 1fr; column-gap: 8px; align-items: end; height: 21px; }
.row.go { grid-template-columns: 57px 1fr 20px; height: 22px; }
.row label { white-space: nowrap; line-height: 22px; }
.pick { position: relative; height: 21px; }
.pick::after { content: ""; position: absolute; right: 7px; top: 8px; border: 4px solid transparent; border-top: 5px solid #000; border-bottom: 0; pointer-events: none; }
.pick select { appearance: none; width: 100%; height: 21px; padding: 0 13px; border: 1px solid #cfd2d3; border-radius: 2px; background: linear-gradient(#f1f2f2, #e6e8e8); }
.row button { display: grid; place-items: center; height: 22px; background: #f4f6f8; border: 1px solid #cfd6db; border-radius: 2px; color: #2f87c4; }
.row button svg { width: 16px; height: 16px; }
.row button:disabled { border-color: #e2e4e5; color: #aaa; }
.row button:disabled svg { opacity: .5; }

/* graphics and messages */
.side { min-width: 0; min-height: 0; display: grid; grid-template-rows: 661fr 165fr; gap: 6px; }
.tabs { display: flex; flex: none; height: 33px; padding-left: 9px; border-bottom: 1px solid #d6dadc; }
.tabs > button { display: flex; align-items: center; gap: 8px; padding: 0 4px; margin-right: 19px; font-size: 13px; color: #444; border-bottom: 2px solid transparent; }
.tabs > .now { color: #34588c; border-bottom-color: #4585a8; }
.tabs > button > svg { width: 10px; height: 10px; margin-right: 2px; }
.view { height: 26px; padding-left: 4px; }
.messages .view { height: 28px; }
.plot { flex: 1; min-height: 0; width: 100%; background: #fff; }
.plot text { font: 13px "DejaVu Sans", sans-serif; fill: #222; }
.plot .unit { font-size: 11px; }
.frame { fill: none; stroke: #808080; stroke-width: 2; }
.tick { stroke: #808080; stroke-width: 2; }
.solid { fill: #c8c8c8; stroke: #222; }
.edge { fill: none; stroke: #222; }
.pore { fill: #fff; stroke: #222; }
.log { flex: 1; margin: 0 4px 5px 5px; background: #fcfdff; }
.lines { flex: 1; min-width: 0; display: flex; flex-direction: column; justify-content: flex-end; padding-left: 3px; }
.lines p { flex: none; height: 17px; padding-top: 1px; line-height: 17px; white-space: nowrap; }

.cursor { position: absolute; left: 951px; top: 587px; width: 14px; height: 18px; }
```
FILE: plot.js
```js
const NS = "http://www.w3.org/2000/svg";
const add = (parent, tag, attrs, text) => {
  const el = document.createElementNS(NS, tag);
  for (const k in attrs) el.setAttribute(k, attrs[k]);
  if (text !== undefined) el.textContent = text;
  parent.appendChild(el);
};

// Axis ticks: 2.263 px per micrometre, origin at (1070, 664).
const scale = 2.263;
const ticks = document.getElementById("ticks");
for (let v = 0; v <= 350; v += 50) {
  const x = Math.round(1070 + v * scale);
  add(ticks, "path", { class: "tick", d: `M${x} 106v8M${x} 684v8` });
  add(ticks, "text", { x, y: 702 }, v);
}
for (let v = 0; v <= 240; v += 20) {
  const y = Math.round(664 - v * scale);
  add(ticks, "path", { class: "tick", d: `M1002 ${y}h8M1899 ${y}h8` });
  add(ticks, "text", { x: 1002, y: y + 10, "text-anchor": "end" }, v);
}

// Pore columns: the centre of the topmost circle in each column.
const tops = [177.6, 206, 170.5, 192.7, 172.2, 198.5, 177.6, 209.7, 174.6, 198.5, 171.7, 206.3, 183.9, 205.7, 174.2, 189.7];
const R = 22.6, pitch = 56.6;
const L = 1092.5, T = 161.5, B = 636.5, E = 1839.5;
const pores = document.getElementById("pores");
let dots = "";
const dot = (x, y) => { dots += `M${Math.round(x) - 1.5} ${Math.round(y) - 1.5}h3v3h-3z`; };
const inside = (x, y) => x >= L && x <= E && y >= T && y <= B;
tops.forEach((top, i) => {
  const cx = 1103.4 + i * 48.66;
  for (let cy = top; cy - R < B; cy += pitch) {
    add(pores, "circle", { class: "pore", cx, cy, r: R });
    for (const [dx, dy] of [[R, 0], [-R, 0], [0, R], [0, -R]])
      if (inside(cx + dx, cy + dy)) dot(cx + dx, cy + dy);
    for (const x of [L, E]) {
      const h = Math.sqrt(R * R - (x - cx) ** 2);
      if (h > 0) for (const y of [cy - h, cy + h]) if (inside(x, y)) dot(x, y);
    }
    for (const y of [T, B]) {
      const w = Math.sqrt(R * R - (y - cy) ** 2);
      if (w > 0) for (const x of [cx - w, cx + w]) if (inside(x, y)) dot(x, y);
    }
  }
  // Boundary segments left between neighbouring openings on the outlet side.
  if (i === tops.length - 1) {
    const h = Math.sqrt(R * R - (E - cx) ** 2);
    let d = `M${E} ${T}V${top - h}`;
    for (let cy = top; cy + pitch - h < B; cy += pitch) d += `M${E} ${cy + h}V${cy + pitch - h}`;
    add(pores, "path", { class: "edge", d });
  }
});
for (const x of [1069.5, L]) for (const y of [T, B]) dot(x, y);
dot(E, T);
document.getElementById("points").setAttribute("d", dots);
```
